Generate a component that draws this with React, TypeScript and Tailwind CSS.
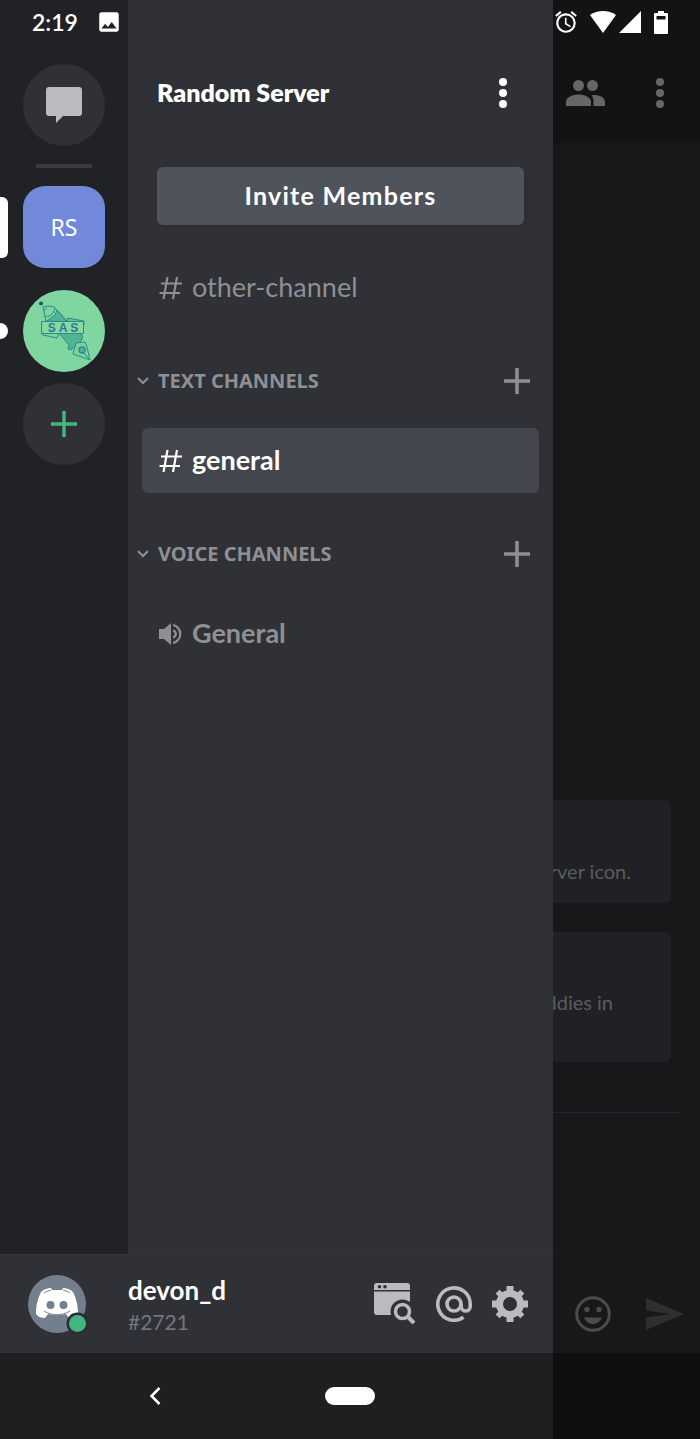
import type { ReactNode } from "react";
import { MdAlarm, MdImage } from "react-icons/md";

const channelGroups = [
  { title: "Text Channels", channels: [{ name: "general", kind: "text", active: true }] },
  { title: "Voice Channels", channels: [{ name: "General", kind: "voice", active: false }] },
];

function Kebab() {
  return (
    <svg width="10" height="30" viewBox="0 0 10 30" fill="currentColor">
      <circle cx="5" cy="4" r="4" />
      <circle cx="5" cy="15" r="4" />
      <circle cx="5" cy="26" r="4" />
    </svg>
  );
}

function Plus() {
  return (
    <svg width="26" height="26" viewBox="0 0 26 26" stroke="currentColor" strokeWidth="3.500">
      <path d="M13 0v26M0 13h26" />
    </svg>
  );
}

function HashIcon() {
  return (
    <svg width="24" height="24" viewBox="0 0 24 24" fill="none" stroke="currentColor" strokeWidth="2.200">
      <path d="M9.500 1 5.500 23M19 1l-4 22M3 7.500h21M1.500 17H22" />
    </svg>
  );
}

function SpeakerIcon() {
  return (
    <svg width="24" height="24" viewBox="0 0 24 24" fill="none" stroke="currentColor" strokeWidth="2.200">
      <path d="M1 7h5l7-6v22l-7-6H1z" fill="currentColor" stroke="none" />
      <path d="M15 3a9.200 9.200 0 0 1 0 18" />
      <path d="M15 8.500a3.600 3.600 0 0 1 0 7" />
    </svg>
  );
}

function SketchLogo() {
  return (
    <svg width="82" height="82" viewBox="0 0 82 82" fill="none" stroke="#2b8c88" strokeWidth="1">
      <path d="m20 17 3 14 3 1 18-1-13-14-6-1z" />
      <path d="m24 31 8-6 2-5 10 12z" fill="#4db795" />
      <path d="M21 26c2 1 3 0 5 0 3-1 5-4 6-8" />
      <path d="m20 21 4-3" />
      <path d="M44 32l1-4 16 3v4z" fill="#5fc398" />
      <path d="m19 43 1 2 14 3 2-5" fill="#7ed3a0" />
      <path d="m36 43 10 12-1 4 3 1 10-9 2-5-4-3z" fill="#4db795" />
      <path d="M18.500 31.500h42v12h-42z" fill="#8bd6a5" />
      <path d="m53 53 9-1 2 5 3 13-17-6z" fill="#7ed3a0" />
      <path d="m59 61 8 9" />
      <circle cx="59" cy="60" r="3" fill="#4db795" strokeWidth="1.500" />
      <circle cx="18" cy="13.500" r="2" fill="#16596b" stroke="none" />
      <text
        x="40"
        y="42"
        textAnchor="middle"
        fill="#237f8c"
        stroke="none"
        className="font-['Liberation_Sans',sans-serif] text-[12px] font-bold"
      >
        S A S
      </text>
    </svg>
  );
}

function StatusIcons() {
  return (
    <div className="flex h-11 items-center text-white">
      <MdAlarm size={26} />
      <svg className="ml-[11px]" width="26" height="22" viewBox="0 0 26 22" fill="currentColor">
        <path d="M0 4C7-1.300 19-1.300 26 4L13 22z" />
      </svg>
      <svg className="ml-[3px]" width="22" height="22" viewBox="0 0 22 22" fill="currentColor">
        <path d="M22 0v22H0z" />
      </svg>
      <svg className="ml-[13px]" width="14" height="23" viewBox="0 0 14 23" fill="currentColor" fillRule="evenodd">
        <path d="M4 0h6v2h3a1 1 0 0 1 1 1v19a1 1 0 0 1-1 1H1a1 1 0 0 1-1-1V3a1 1 0 0 1 1-1h3zM2.500 5v3.500h9V5z" />
      </svg>
    </div>
  );
}

function ServerRail() {
  return (
    <nav aria-label="Servers" className="flex w-32 shrink-0 flex-col items-center bg-[#202225]">
      <div className="flex h-11 w-full items-center gap-[18px] pl-8 text-white">
        <span className="text-[23px] font-semibold">2:19</span>
        <MdImage size={26} />
      </div>
      <button
        aria-label="Direct messages"
        className="mt-5 flex size-[82px] items-center justify-center rounded-full bg-[#2f3136] text-[#b9bbbe]"
      >
        <svg width="36" height="36" viewBox="0 0 36 36" fill="currentColor">
          <path d="M3 0h30a3 3 0 0 1 3 3v23a3 3 0 0 1-3 3H17l-7 7v-7H3a3 3 0 0 1-3-3V3a3 3 0 0 1 3-3z" />
        </svg>
      </button>
      <div className="mt-[18px] h-1 w-14 bg-[#3a3b40]" />
      <div className="mt-[18px] flex w-full items-center">
        <span className="h-[61px] w-2 rounded-r-md bg-white" />
        <button className="ml-[15px] size-[82px] rounded-[22px] bg-[#7289da] font-['Noto_Sans',sans-serif] text-[23px] text-white">
          RS
        </button>
      </div>
      <div className="mt-[22px] flex w-full items-center">
        <span className="h-4 w-2 rounded-r-full bg-white" />
        <button aria-label="SAS" className="ml-[15px] size-[82px] overflow-hidden rounded-full bg-[#7fd6a1]">
          <SketchLogo />
        </button>
      </div>
      <button
        aria-label="Add a server"
        className="mt-[11px] flex size-[82px] items-center justify-center rounded-full bg-[#2f3136] text-[#43b581]"
      >
        <Plus />
      </button>
    </nav>
  );
}

function Channel({ name, kind, active, bold }: { name: string; kind: string; active?: boolean; bold?: boolean }) {
  return (
    <a
      href="#"
      className={`mx-[14px] flex h-[65px] items-center gap-[10px] rounded-md pl-4 text-[27px] ${
        active ? "bg-[#43464d] text-white" : "text-[#8e9094]"
      } ${bold ? "font-bold" : ""}`}
    >
      {kind === "voice" ? <SpeakerIcon /> : <HashIcon />}
      {name}
    </a>
  );
}

function ChannelPanel() {
  return (
    <section className="min-w-0 flex-1 bg-[#2f3136] pt-11">
      <header className="flex h-[98px] items-center justify-between pr-[45px] pl-[29px] text-white">
        <h1 className="text-[25px] font-extrabold">Random Server</h1>
        <button aria-label="Server options">
          <Kebab />
        </button>
      </header>
      <div className="px-[29px] pt-[25px] pb-[30px]">
        <button className="h-[58px] w-full rounded-md bg-[#4f545c] text-[25px] font-bold tracking-wider text-white shadow-sm">
          Invite Members
        </button>
      </div>
      <Channel name="other-channel" kind="text" />
      {channelGroups.map((g) => (
        <div key={g.title}>
          <div className="flex h-[108px] items-center pt-[14px] pr-[23px] pl-[9px] text-[#8e9094]">
            <button className="flex items-center gap-[9px] font-['Noto_Sans',sans-serif] text-[20px] font-bold uppercase">
              <svg width="12" height="8" viewBox="0 0 12 8" fill="none" stroke="currentColor" strokeWidth="2">
                <path d="m1 1 5 5 5-5" />
              </svg>
              {g.title}
            </button>
            <button aria-label={`Add to ${g.title}`} className="ml-auto">
              <Plus />
            </button>
          </div>
          {g.channels.map((c) => (
            <Channel key={c.name} {...c} bold />
          ))}
        </div>
      ))}
    </section>
  );
}

function Avatar() {
  return (
    <svg width="60" height="58" viewBox="0 0 60 58" className="shrink-0">
      <circle cx="29" cy="29" r="29" fill="#747f8d" />
      <path
        d="M13 17c3-3 7-4 10-4l1 2h10l1-2c3 0 7 1 10 4 4 8 5 15 5 22-2 3-6 4-9 4l-3-4c-6 1.500-12 1.500-18 0l-3 4c-3 0-7-1-9-4 0-7 1-14 5-22z"
        fill="#fff"
      />
      <path d="M16 18c2-1.500 4-2 7-3M42 18c-2-1.500-4-2-7-3M16 36c8 5 18 5 26 0" fill="none" stroke="#747f8d" strokeWidth="1" />
      <circle cx="22.500" cy="30" r="4" fill="#747f8d" />
      <circle cx="35.500" cy="30" r="4" fill="#747f8d" />
      <circle cx="49.500" cy="48.500" r="11" fill="#2b2d32" />
      <circle cx="49.500" cy="48.500" r="8.500" fill="#43b581" />
    </svg>
  );
}

function SearchWindowIcon() {
  return (
    <svg width="42" height="42" viewBox="0 0 42 42">
      <path d="M3 0h30a3 3 0 0 1 3 3v4H0V3a3 3 0 0 1 3-3zM0 8.500h36V32H3a3 3 0 0 1-3-3z" fill="currentColor" />
      <circle cx="5.500" cy="3.800" r="1.800" fill="#2f3136" />
      <circle cx="11" cy="3.800" r="1.800" fill="#2f3136" />
      <circle cx="28.500" cy="28.500" r="12" fill="#2f3136" />
      <circle cx="28.500" cy="28.500" r="7" fill="none" stroke="currentColor" strokeWidth="3.500" />
      <path d="m33 33 7 7" stroke="currentColor" strokeWidth="4" />
    </svg>
  );
}

function AtIcon() {
  return (
    <svg width="36" height="36" viewBox="-18 -18 36 36" fill="none" stroke="currentColor" strokeWidth="3.600">
      <circle r="7" />
      <path d="M9.500 13.200A16.200 16.200 0 1 1 16.200 0v2.500a4.500 4.500 0 0 1-9 0V0" />
    </svg>
  );
}

function GearIcon() {
  return (
    <svg width="36" height="36" viewBox="-18 -18 36 36" fill="currentColor">
      <circle r="10.500" fill="none" stroke="currentColor" strokeWidth="7" />
      {[0, 90, 180, 270].map((deg) => (
        <g key={deg}>
          <path d="M-3.500-18h7v6h-7z" transform={`rotate(${deg})`} />
          <path d="M-2.800-17.500h5.600v5h-5.600z" transform={`rotate(${deg + 45})`} />
        </g>
      ))}
    </svg>
  );
}

function UserBar() {
  const actions: { label: string; icon: ReactNode }[] = [
    { label: "Search", icon: <SearchWindowIcon /> },
    { label: "Mentions", icon: <AtIcon /> },
    { label: "Settings", icon: <GearIcon /> },
  ];
  return (
    <div className="flex h-[99px] items-center border-t border-[#34363b] bg-[#2f3136] pr-[25px] pl-7 text-[#b9bbbe]">
      <Avatar />
      <div className="ml-10 pt-1">
        <div className="text-[26px] leading-8 font-bold text-white">devon_d</div>
        <div className="text-[21px] leading-8 text-[#72767d]">#2721</div>
      </div>
      <div className="ml-auto flex items-center gap-5">
        {actions.map((a) => (
          <button key={a.label} aria-label={a.label}>
            {a.icon}
          </button>
        ))}
      </div>
    </div>
  );
}

function SystemNav() {
  return (
    <div className="flex h-[86px] items-center bg-[#1e1f21] pl-[149px] text-white">
      <button aria-label="Back">
        <svg width="12" height="18" viewBox="0 0 12 18" fill="none" stroke="currentColor" strokeWidth="2.500">
          <path d="m10.500 1-8 8 8 8" />
        </svg>
      </button>
      <button aria-label="Home" className="ml-[164px] h-[18px] w-[50px] rounded-full bg-white" />
    </div>
  );
}

// The dimmed conversation that stays visible beside the open drawer
function ChatPeek() {
  return (
    <main className="flex min-w-0 flex-1 flex-col overflow-hidden bg-[#17181a] text-[#5b5c5e]">
      <div className="h-[143px] bg-[#121315]">
        <StatusIcons />
        <div className="flex h-[98px] items-center justify-between pr-[35px] pl-[13px] text-[#656667]">
          <button aria-label="Members">
            <svg width="39" height="26" viewBox="0 0 39 26" fill="currentColor">
              <circle cx="12.500" cy="5.500" r="5.500" />
              <circle cx="26.500" cy="5.500" r="5.500" />
              <path d="M0 26v-4c0-5 7-7.500 12.500-7.500S25 17 25 22v4z" />
              <path d="M25.500 15C33 14.500 39 17 39 22v4H27.500v-4c0-3-1-5.500-2-7z" />
            </svg>
          </button>
          <button aria-label="Chat options">
            <Kebab />
          </button>
        </div>
      </div>
      <div className="flex-1" />
      <div className="mr-[29px] flex h-[103px] items-end justify-end rounded-r-md bg-[#202124] pr-10 pb-4 text-[20px] leading-8 whitespace-nowrap">
        rver icon.
      </div>
      <div className="mt-[29px] mr-[29px] flex h-[130px] items-end justify-end rounded-r-md bg-[#202124] pr-[58px] pb-[44px] text-[20px] leading-8 whitespace-nowrap">
        ddies in
      </div>
      <div className="mt-[50px] mr-5 h-px shrink-0 bg-[#242528]" />
      <div className="mt-[161px] flex h-[79px] items-center justify-between pr-4 pl-[22px]">
        <button aria-label="Emoji" className="text-[#4b4c4e]">
          <svg width="36" height="36" viewBox="0 0 36 36" fill="currentColor">
            <circle cx="18" cy="18" r="16.300" fill="none" stroke="currentColor" strokeWidth="3" />
            <circle cx="12" cy="13.500" r="2.700" />
            <circle cx="24" cy="13.500" r="2.700" />
            <path d="M9 21.500h18c-1.500 4-5 6.500-9 6.500s-7.500-2.500-9-6.500z" />
          </svg>
        </button>
        <button aria-label="Send" className="text-[#2e2f31]">
          <svg width="38" height="32" viewBox="0 0 38 32" fill="currentColor">
            <path d="m0 0 38 16L0 32V19.500L24 16 0 12.500z" />
          </svg>
        </button>
      </div>
      <div className="h-[86px] bg-[#0d0e0f]" />
    </main>
  );
}

export default function App() {
  return (
    <div className="flex min-h-screen bg-[#17181a] font-[Lato,'Noto_Sans',sans-serif]">
      <div className="flex w-[79%] shrink-0 flex-col">
        <div className="flex flex-1">
          <ServerRail />
          <ChannelPanel />
        </div>
        <UserBar />
        <SystemNav />
      </div>
      <ChatPeek />
    </div>
  );
}
